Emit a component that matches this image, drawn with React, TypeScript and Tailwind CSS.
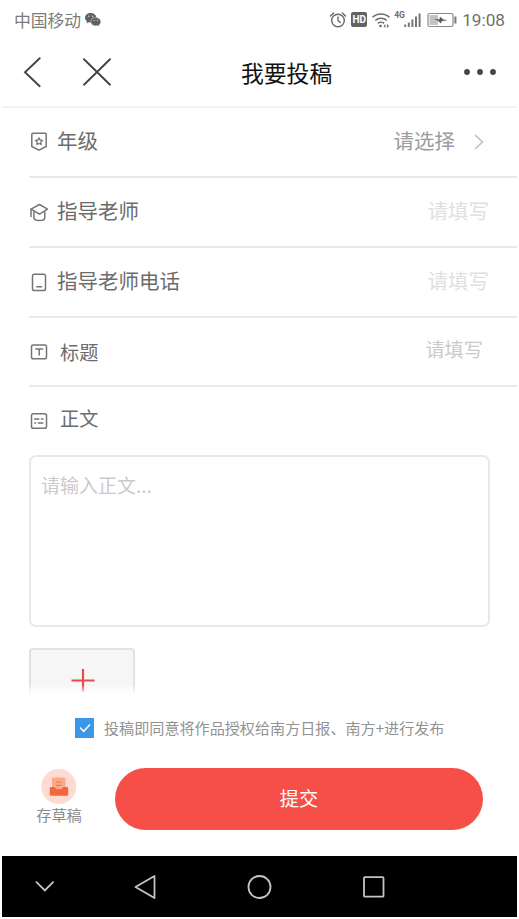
import React from 'react';

interface FormRowProps {
  icon: React.ReactNode;
  label: string;
  className: string;
  labelClass: string;
  children?: React.ReactNode;
}

/**
 * FormRow
 *
 * A single line of the form: icon and label on the left, value on the right.
 */
function FormRow({ icon, label, className, labelClass, children }: FormRowProps) {
  return (
    <div className={`ml-[27px] flex items-start border-[#e9e9e9] ${className}`}>
      <span className="mt-1 h-5 w-5 shrink-0">{icon}</span>
      <span className={`leading-7 text-[#6c6c6c] ${labelClass}`}>{label}</span>
      {children}
    </div>
  );
}

const iconProps = {
  width: 20,
  height: 20,
  viewBox: '0 0 20 20',
  fill: 'none',
  stroke: '#757575',
  strokeWidth: 1.5,
  strokeLinecap: 'round' as const,
  strokeLinejoin: 'round' as const,
};

function GradeIcon() {
  return (
    <svg {...iconProps}>
      <path d="M4 2.3h12a1.2 1.2 0 0 1 1.2 1.2v12L10 19.2l-7.2-3.7v-12A1.2 1.2 0 0 1 4 2.3Z" />
      <path d="m10 6.9 1.1 2.1 2.4.4-1.7 1.7.4 2.4-2.2-1-2.2 1 .4-2.4-1.7-1.7 2.4-.4Z" strokeWidth="1.3" />
    </svg>
  );
}

function TeacherIcon() {
  return (
    <svg {...iconProps}>
      <path d="M10.5 2.5 2 7.2l8.5 5 8-5Z" />
      <path d="M2 7.2v7.3M4.900 10v5.4c0 2 2.5 3.1 5.6 3.1s5.3-1.1 5.3-3.1V10" />
    </svg>
  );
}

function PhoneIcon() {
  return (
    <svg {...iconProps}>
      <rect x="3.5" y="2.3" width="13" height="16.2" rx="1.8" />
      <path d="M7.7 14.8h5" />
    </svg>
  );
}

function TitleIcon() {
  return (
    <svg {...iconProps}>
      <rect x="2.5" y="3" width="15" height="13.7" rx="1.8" />
      <path d="M6.8 7h6.8M10.2 7v6" />
    </svg>
  );
}

function ContentIcon() {
  return (
    <svg {...iconProps}>
      <rect x="2.5" y="2.8" width="15" height="14.5" rx="1.8" />
      <path d="M5.6 8h4.2M12.5 8H14M5.800 12h.8M9.300 12h4.500" />
    </svg>
  );
}

function WechatIcon() {
  return (
    <svg width="18" height="16" viewBox="0 0 18 16">
      <path d="M6.7 1C3.5 1 1 3.1 1 5.8c0 1.5.8 2.8 2 3.7l-.5 1.9 2.2-1.1c.7.2 1.3.3 2 .3 3.2 0 5.7-2.1 5.7-4.8S9.9 1 6.7 1Z" fill="#626262" />
      <path d="M11.8 5.5c-2.8 0-5 1.8-5 4.2s2.2 4.2 5 4.2c.6 0 1.2-.1 1.7-.3l2 1-.5-1.7c1.1-.8 1.8-1.9 1.8-3.2 0-2.4-2.2-4.2-5-4.2Z" fill="#626262" stroke="#fff" strokeWidth=".4" />
      <g fill="#ddd">
        <circle cx="4.8" cy="4.3" r=".7" />
        <circle cx="8.6" cy="4.3" r=".7" />
        <circle cx="10.2" cy="8.5" r=".6" />
        <circle cx="13.4" cy="8.5" r=".6" />
      </g>
    </svg>
  );
}

function StatusIcons() {
  return (
    <div className="flex items-center">
      {/* Alarm */}
      <svg width="18" height="18" viewBox="0 0 18 18" fill="none" stroke="#686868" strokeWidth="1.4" strokeLinecap="round">
        <circle cx="9" cy="9.5" r="6.3" />
        <path d="M9 6v3.7l2.3 1.7M1.5 5l3.100-3.100M16.500 5l-3.100-3.100" />
      </svg>
      <span className="ml-1 flex h-[15px] w-4 items-center justify-center rounded-[2px] bg-[#626262] font-['Roboto',sans-serif] text-[10px] leading-none font-bold text-white">
        HD
      </span>
      {/* Wifi */}
      <svg className="ml-1" width="20" height="18" viewBox="0 0 20 18" fill="none" stroke="#6c6c6c" strokeWidth="1.5">
        <path d="M1.5 6.3c4.700-4.500 12.300-4.500 17 0M4.300 9.500c3.200-3 8.200-3 11.400 0M6.900 12.400c1.700-1.600 4.500-1.600 6.200 0" />
        <circle cx="9.5" cy="15" r="1.3" fill="#6c6c6c" stroke="none" />
        <path d="M14.500 13 12.500 15l2 2zM16 13l2 2-2 2z" fill="#6c6c6c" stroke="none" />
      </svg>
      <span className="mb-2.5 ml-[3px] w-[10px] font-['Roboto',sans-serif] text-[8.5px] leading-none font-bold text-[#6c6c6c]">
        4G
      </span>
      {/* Signal */}
      <svg width="18" height="18" viewBox="0 0 18 18" fill="#777">
        <path d="M.2 13.6h2V16h-2zM3.800 11.500h2V16h-2zM7.400 8.500h2V16h-2zM11 5.500h2V16h-2zM14.600 2.500h2V16h-2z" />
      </svg>
      {/* Battery */}
      <svg className="ml-[5px]" width="30" height="16" viewBox="0 0 30 16">
        <rect x="1" y="1.5" width="25" height="13" rx="1.5" fill="#fff" stroke="#8a8a8a" strokeWidth="1.2" />
        <path d="M2.5 3H11v10H2.500z" fill="#c3c3c3" />
        <path d="m7.5 7.2 5 .3.7-2.500 3 2.600 3.300.7-5 .6-.7 2.300-3-2.600Z" fill="#555" stroke="#555" strokeWidth=".3" />
        <path d="M27.4 4.500h2v7h-2z" fill="#777" />
      </svg>
    </div>
  );
}

function StatusBar() {
  return (
    <div className="flex h-10 items-center pr-3 pl-3">
      <span className="text-[16.8px] leading-none text-[#7c7c7c]">中国移动</span>
      <span className="ml-[3px]"><WechatIcon /></span>
      <div className="ml-auto flex items-center">
        <StatusIcons />
        <span className="mt-0.5 ml-[5px] font-['Roboto',sans-serif] text-[17.2px] leading-none text-[#707070]">19:08</span>
      </div>
    </div>
  );
}

function Header() {
  return (
    <header className="flex h-[68px] items-center border-b-2 border-[#f3f3f3] pr-5 pl-5">
      <svg width="20" height="32" viewBox="0 0 20 32" fill="none" stroke="#444" strokeWidth="1.9" strokeLinecap="round">
        <path d="M17.700 1.200 3 15.200l14.700 14" />
      </svg>
      <svg className="ml-10" width="30" height="30" viewBox="0 0 30 30" fill="none" stroke="#444" strokeWidth="1.9" strokeLinecap="round">
        <path d="m2 1.200 26 25.500M28 1.200 2 26.700" />
      </svg>
      <h1 className="ml-[129px] text-[22.8px] leading-none font-normal text-[#111]">我要投稿</h1>
      <svg className="ml-auto" width="34" height="8" viewBox="0 0 34 8" fill="#444">
        <circle cx="4" cy="3" r="2.9" />
        <circle cx="17" cy="3" r="2.9" />
        <circle cx="30" cy="3" r="2.9" />
      </svg>
    </header>
  );
}

function DraftButton() {
  return (
    <button className="flex w-[50px] flex-col items-center">
      <svg width="36" height="36" viewBox="0 0 36 36">
        <circle cx="17.8" cy="18.5" r="17.5" fill="#fddbd3" />
        <rect x="11" y="9.5" width="13.5" height="15" rx="1.5" fill="#fba989" />
        <path d="M15 14h5.5M15 17.300h5.500" stroke="#ef7956" strokeWidth="1.2" />
        <path d="M10 19h3.500l2 2.300h5l2-2.300H26a1.200 1.200 0 0 1 1.200 1.200v6a1.500 1.500 0 0 1-1.500 1.500H10.300a1.500 1.500 0 0 1-1.500-1.500v-6A1.200 1.200 0 0 1 10 19Z" fill="#f2663d" />
      </svg>
      <span className="text-[15.2px] leading-5 whitespace-nowrap text-[#8c8c8c]">存草稿</span>
    </button>
  );
}

function NavigationBar() {
  return (
    <nav className="flex h-[61px] items-center bg-black pl-[33px]">
      <svg width="20" height="12" viewBox="0 0 20 12" fill="none" stroke="#c4c4c4" strokeWidth="1.8" strokeLinecap="round">
        <path d="m1.500 1.200 8.300 8.300 8.300-8.300" />
      </svg>
      <svg className="ml-[79px]" width="22" height="26" viewBox="0 0 22 26" fill="none" stroke="#c4c4c4" strokeWidth="1.8" strokeLinejoin="round">
        <path d="M20.500 2v22L1.500 13Z" />
      </svg>
      <svg className="ml-[91px]" width="26" height="26" viewBox="0 0 26 26" fill="none" stroke="#c4c4c4" strokeWidth="1.8">
        <circle cx="12.5" cy="13" r="11" />
      </svg>
      <svg className="ml-[90px]" width="22" height="22" viewBox="0 0 22 22" fill="none" stroke="#c4c4c4" strokeWidth="1.8" strokeLinejoin="round">
        <rect x="1" y="1.2" width="19.5" height="19.5" rx=".8" />
      </svg>
    </nav>
  );
}

export default function App() {
  return (
    <div className="h-[919px] w-[519px] overflow-hidden bg-white px-[2px] pb-[2px] font-['Noto_Sans_CJK_SC',sans-serif]">
      <StatusBar />
      <Header />

      <main className="h-[588px] overflow-hidden">
        <FormRow icon={<GradeIcon />} label="年级" className="h-[70px] border-b-2 pt-[19px]" labelClass="mt-[-1px] ml-2 text-[20.5px]">
          <span className="mt-[-1px] ml-auto text-[20.5px] leading-7 text-[#9c9c9c]">请选择</span>
          <svg className="mt-[7px] mr-[31px] ml-[17px]" width="14" height="17" viewBox="0 0 14 17" fill="none" stroke="#c2c2c2" strokeWidth="1.7">
            <path d="m3 1 7.5 7L3 15" />
          </svg>
        </FormRow>
        <FormRow icon={<TeacherIcon />} label="指导老师" className="h-[70px] border-b-2 pt-5" labelClass="mt-[-2px] ml-2 text-[20.5px]">
          <span className="mt-[-2px] mr-[28px] ml-auto text-[20.5px] leading-7 text-[#e0e0e0]">请填写</span>
        </FormRow>
        <FormRow icon={<PhoneIcon />} label="指导老师电话" className="h-[70px] border-b-2 pt-5" labelClass="mt-[-2px] ml-2 text-[20.5px]">
          <span className="mt-[-2px] mr-[28px] ml-auto text-[20.5px] leading-7 text-[#e0e0e0]">请填写</span>
        </FormRow>
        <FormRow icon={<TitleIcon />} label="标题" className="h-[69px] border-b-2 pt-5" labelClass="ml-[11px] text-[19.2px]">
          <span className="mt-[-3px] mr-[34px] ml-auto text-[19.2px] leading-7 text-[#cacaca]">请填写</span>
        </FormRow>
        <FormRow icon={<ContentIcon />} label="正文" className="h-[68px] pt-5" labelClass="ml-[11px] mt-[-3px] text-[19.2px]" />

        <div className="ml-[27px] h-[172px] w-[461px] rounded-[7px] border-2 border-[#e8e8e8] px-[10px] pt-[14px] text-[19px] leading-7 text-[#cacaca]">
          请输入正文...
        </div>

        {/* Attachment button, fading out under the footer */}
        <div className="mt-[21px] ml-[27px] h-[46px] w-[106px] overflow-hidden mask-b-from-80%">
          <div className="flex h-[106px] justify-center rounded-[4px] border-2 border-[#e2e2e2] bg-[#f6f6f6] pt-[19px] pl-px">
            <svg width="24" height="24" viewBox="0 0 24 24" fill="none" stroke="#e44a49" strokeWidth="2.2">
              <path d="M.5 11.500h23M12 0v23" />
            </svg>
          </div>
        </div>
      </main>

      <footer className="h-[160px]">
        <div className="ml-[73px] flex h-[64px] items-center">
          <span className="flex h-5 w-[19px] items-center justify-center bg-[#3b97e8]">
            <svg width="12" height="10" viewBox="0 0 12 10" fill="none" stroke="#fff" strokeWidth="1.5">
              <path d="m1 4.500 3.700 3.800L11 1.500" />
            </svg>
          </span>
          <span className="ml-[10px] text-[15.1px] leading-none whitespace-nowrap text-[#929292]">
            投稿即同意将作品授权给南方日报、南方+进行发布
          </span>
        </div>
        <div className="flex items-start pt-[8px] pl-[32px]">
          <DraftButton />
          <button className="ml-[31px] h-[62px] w-[368px] rounded-full bg-[#f54f48] text-[19.2px] leading-none text-white">
            提交
          </button>
        </div>
      </footer>

      <NavigationBar />
    </div>
  );
}
